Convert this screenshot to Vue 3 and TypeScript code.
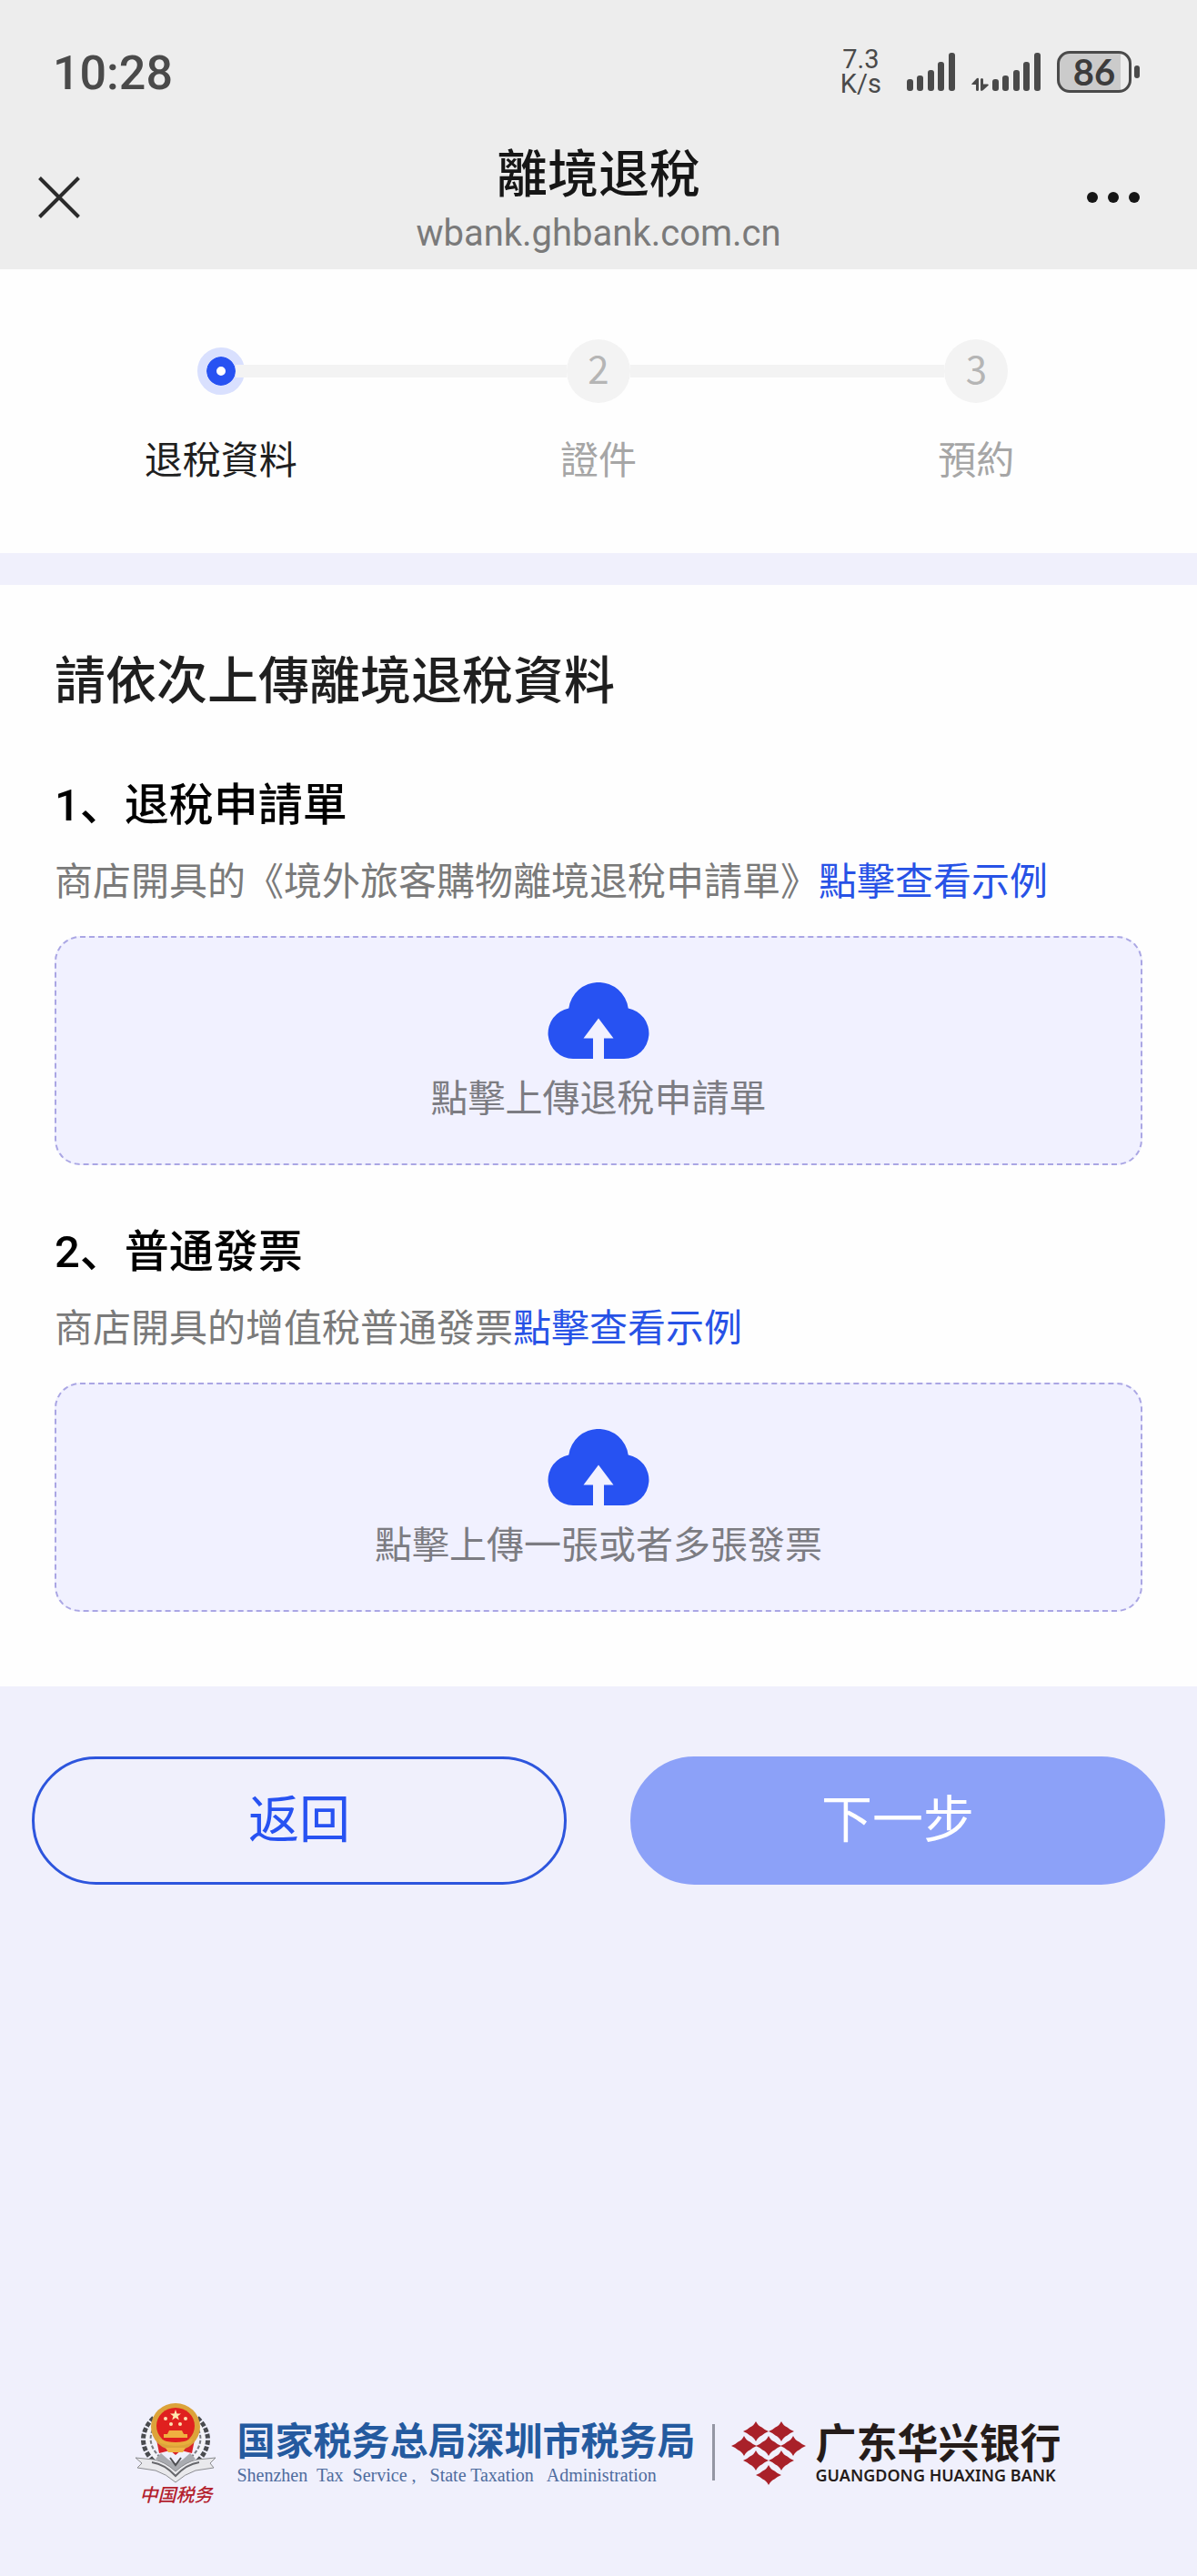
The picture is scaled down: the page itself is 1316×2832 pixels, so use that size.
<script setup lang="ts">
interface Step {
  label: string
  active: boolean
}

interface UploadItem {
  title: string
  description: string
  hint: string
}

const steps: Step[] = [
  { label: '退稅資料', active: true },
  { label: '證件', active: false },
  { label: '預約', active: false },
]

const uploads: UploadItem[] = [
  {
    title: '退稅申請單',
    description: '商店開具的《境外旅客購物離境退稅申請單》',
    hint: '點擊上傳退稅申請單',
  },
  {
    title: '普通發票',
    description: '商店開具的增值稅普通發票',
    hint: '點擊上傳一張或者多張發票',
  },
]

/* x, top of each signal bar; all share the same baseline */
const bars: [number, number][] = [
  [0, 29],
  [11, 25],
  [23, 19],
  [34, 10],
  [46, 0],
]

/* centres of the stars in the bank logo */
const stars: [number, number][] = [
  [27, 11],
  [55, 11],
  [14, 27],
  [41, 27],
  [68, 27],
  [27, 43],
  [55, 43],
  [41, 59],
]
</script>

<template>
  <div class="page">
    <header class="top">
      <div class="status">
        <time class="clock">10:28</time>
        <div class="indicators">
          <div class="speed"><span>7.3</span><span>K/s</span></div>
          <svg class="signal" width="53" height="42" viewBox="0 0 53 42" aria-hidden="true">
            <rect v-for="[x, y] in bars" :key="x" :x="x" :y="y" width="7" :height="42 - y" rx="3" />
          </svg>
          <svg class="signal data" width="76" height="42" viewBox="0 0 76 42" aria-hidden="true">
            <path d="M0 34.500 6 28Q8 27 8 29V40.500Q8 42 6.500 42T5 40.500V35H1ZM19 35.500 13 41Q10 43 10 40.500V29.500Q10 28 11.500 28T13 29.500V34.500H18Z" />
            <rect v-for="[x, y] in bars" :key="x" :x="x + 23" :y="y" width="7" :height="42 - y" rx="3" />
          </svg>
          <div class="battery">
            <div class="cell"><span>86</span></div>
            <i class="nub"></i>
          </div>
        </div>
      </div>
      <div class="nav">
        <button class="icon-button" type="button" aria-label="關閉">
          <svg width="46" height="46" viewBox="0 0 46 46">
            <path d="M1.500 1.500 44.500 44.500M44.500 1.500 1.500 44.500" fill="none" stroke="#2b2b2b" stroke-width="4" />
          </svg>
        </button>
        <div class="heading">
          <h1>離境退稅</h1>
          <p>wbank.ghbank.com.cn</p>
        </div>
        <button class="icon-button more" type="button" aria-label="更多">
          <svg width="58" height="12" viewBox="0 0 58 12" fill="#161616">
            <circle cx="6" cy="6" r="6" />
            <circle cx="29" cy="6" r="6" />
            <circle cx="52" cy="6" r="6" />
          </svg>
        </button>
      </div>
    </header>

    <ol class="steps">
      <li v-for="(step, i) in steps" :key="step.label" :class="{ active: step.active }">
        <div class="track">
          <i class="line"></i>
          <span v-if="step.active" class="dot"></span>
          <span v-else class="number">{{ i + 1 }}</span>
          <i class="line"></i>
        </div>
        <span class="label">{{ step.label }}</span>
      </li>
    </ol>

    <main class="content">
      <h2>請依次上傳離境退稅資料</h2>
      <section v-for="(item, i) in uploads" :key="item.title" class="item">
        <h3><span class="index">{{ i + 1 }}</span>、{{ item.title }}</h3>
        <p>{{ item.description }}<a href="#">點擊查看示例</a></p>
        <button class="upload" type="button">
          <svg width="112" height="84" viewBox="0 0 112 84" aria-hidden="true">
            <path
              fill="#2752f2"
              d="M23.300 28.500A33 33 0 0 1 88.700 28.500A28 28 0 0 1 84 84H62V61.500H72.500L56 39.500 39.500 61.500H50V84H28A28 28 0 0 1 23.300 28.500Z"
            />
          </svg>
          <span>{{ item.hint }}</span>
        </button>
      </section>
    </main>

    <div class="actions">
      <button class="back" type="button">返回</button>
      <button class="next" type="button">下一步</button>
    </div>

    <footer class="brands">
      <div class="emblem">
        <svg width="88" height="88" viewBox="0 0 88 88" aria-hidden="true">
          <!-- wheat ears -->
          <g fill="none" stroke="#494b4f" stroke-width="5" stroke-dasharray="5 2">
            <path d="M20 16C4 32 5 50 21 65" />
            <path d="M68 16C84 32 83 50 67 65" />
          </g>
          <g fill="none" stroke="#f4f4f6" stroke-width="3">
            <path d="M21 20C9 34 11 50 26 63M67 20C79 34 77 50 62 63" />
          </g>
          <g fill="none" stroke="#77797d" stroke-width="2" stroke-dasharray="4 2">
            <path d="M22 24C13 36 15 50 30 62M66 24C75 36 73 50 58 62" />
          </g>
          <!-- national emblem -->
          <path d="M23 40H65L62 55 50 52 44 57 38 52 26 55Z" fill="#d9232a" />
          <ellipse cx="44" cy="26" rx="27" ry="26" fill="#dca33a" />
          <ellipse cx="44" cy="25" rx="21" ry="20" fill="#e0201f" />
          <path d="M44 7 45.500 11.500H50L46.500 14.300 47.800 18.500 44 16 40.200 18.500 41.500 14.300 38 11.500H42.500Z" fill="#ffe9b0" />
          <g fill="#ffe0b0">
            <circle cx="33" cy="17" r="2" />
            <circle cx="55" cy="17" r="2" />
            <circle cx="39" cy="23" r="2" />
            <circle cx="49" cy="23" r="2" />
          </g>
          <path d="M37 30H51L53 34H57V38H31V34H35Z" fill="#f0b040" />
          <path d="M25 39Q44 47 63 39L61 44Q44 50 27 44Z" fill="#e8ae3c" />
          <path d="M33 49H55L52 54H36Z" fill="#efb445" />
          <!-- ribbon -->
          <path d="M28 55Q35 62 44 67Q53 62 60 55L66 61 44 76 22 61Z" fill="#a9abb0" />
          <path
            d="M0 60 20 62Q32 64 44 75Q56 64 68 62L88 60 82 66 86 71 66 74Q54 78 44 87Q34 78 22 74L2 71 7 66Z"
            fill="#e9e9ec"
            stroke="#8b8c90"
            stroke-width="1"
          />
          <path d="M18 65Q32 67 44 80Q56 67 70 65" fill="none" stroke="#66676b" stroke-width="2" />
          <path d="M38 60 44 68 50 60" fill="none" stroke="#4c4d50" stroke-width="2" />
        </svg>
        <span class="script">中国税务</span>
      </div>
      <div class="tax">
        <strong>国家税务总局深圳市税务局</strong>
        <small>Shenzhen&nbsp; Tax&nbsp; Service ,&nbsp;&nbsp; State Taxation&nbsp;&nbsp; Administration</small>
      </div>
      <i class="divider"></i>
      <svg class="bank-logo" width="82" height="70" viewBox="0 0 82 70" aria-hidden="true">
        <path
          v-for="[x, y] in stars"
          :key="`${x}-${y}`"
          :transform="`translate(${x} ${y})`"
          d="M0 -11Q2.500 -6 6.500 -4.500Q9 -2 14 0Q9 2 6.500 4.500Q2.500 6 0 11Q-2.500 6 -6.500 4.500Q-9 2 -14 0Q-9 -2 -6.500 -4.500Q-2.500 -6 0 -11Z"
          fill="#a92129"
        />
      </svg>
      <div class="bank">
        <strong>广东华兴银行</strong>
        <small>GUANGDONG HUAXING BANK</small>
      </div>
    </footer>
  </div>
</template>

<style>
body {
  margin: 0;
  background: #f0f0fc;
}
</style>

<style scoped>
.page {
  display: flex;
  flex-direction: column;
  min-height: 100vh;
  background: #f0f0fc;
  color: #1f1f1f;
  font-family: "Noto Sans CJK SC", "Noto Sans CJK TC", sans-serif;
}

h1,
h2,
h3,
p,
ol {
  margin: 0;
  padding: 0;
  font-weight: 500;
}

button {
  padding: 0;
  border: 0;
  background: none;
  color: inherit;
  font-family: inherit;
}

svg {
  display: block;
  flex: none;
}

.top {
  padding-bottom: 15px;
  background: #ededed;
}

.status {
  box-sizing: border-box;
  display: flex;
  align-items: center;
  justify-content: space-between;
  height: 153px;
  padding: 4px 63px 0 58px;
  color: #4a4a4a;
}

.clock {
  padding-top: 4px;
  font-family: Roboto, sans-serif;
  font-size: 52px;
  font-weight: 500;
  line-height: 60px;
}

.indicators {
  display: flex;
  align-items: center;
}

.speed {
  display: flex;
  flex-direction: column;
  align-items: center;
  margin-right: 28px;
  font-family: Roboto, sans-serif;
  font-size: 29px;
  line-height: 27px;
}

.signal {
  fill: #4a4a4a;
}

.data {
  margin: 0 18px;
}

.battery {
  display: flex;
  align-items: center;
  gap: 3px;
}

.cell {
  box-sizing: border-box;
  width: 82px;
  height: 46px;
  border: 3px solid #4a4a4a;
  border-radius: 14px;
  background: linear-gradient(to right, #cbcbcb 88%, #ededed 88%);
  color: #3c3c3c;
  font-family: Lato, sans-serif;
  font-size: 40px;
  font-weight: 700;
  line-height: 40px;
  text-align: center;
}

.nub {
  width: 6px;
  height: 14px;
  border-radius: 3px;
  background: #4a4a4a;
}

.nav {
  display: grid;
  grid-template-rows: 128px;
  grid-template-columns: 1fr auto 1fr;
  align-items: center;
  padding: 0 63px 0 42px;
}

.icon-button {
  display: flex;
  width: 58px;
}

.more {
  justify-self: end;
}

.heading {
  align-self: start;
  margin-left: 21px;
  text-align: center;
}

.heading h1 {
  color: #161616;
  font-size: 56px;
  line-height: 68px;
}

.heading p {
  padding-top: 6px;
  color: #7a7a7a;
  font-family: Roboto, sans-serif;
  font-size: 40px;
  font-weight: 400;
  line-height: 60px;
}

.steps {
  display: flex;
  padding: 77px 35px 75px;
  background: #fefefe;
  list-style: none;
}

.steps li {
  flex: 1;
  color: #a6a6a6;
  font-size: 42px;
  font-weight: 400;
  line-height: 60px;
  text-align: center;
}

.steps .active {
  color: #1f1f1f;
}

.track {
  display: flex;
  align-items: center;
  height: 70px;
  margin-bottom: 30px;
}

.line {
  flex: 1;
  height: 14px;
  background: #f3f3f3;
}

li:first-child .line:first-child,
li:last-child .line:last-child {
  background: none;
}

.number {
  width: 70px;
  height: 70px;
  border-radius: 50%;
  background: #f3f3f3;
  color: #b5b5b5;
  line-height: 62px;
}

.dot {
  box-sizing: border-box;
  width: 32px;
  height: 32px;
  border: 11px solid #2752f2;
  border-radius: 50%;
  outline: 10px solid #d9e0fe;
  background: #fff;
}

.content {
  margin-top: 35px;
  padding: 61px 60px 82px;
  background: #fefefe;
}

h2 {
  margin-bottom: 67px;
  font-size: 56px;
  line-height: 80px;
}

.item + .item {
  margin-top: 61px;
}

h3 {
  color: #000;
  font-size: 49px;
  line-height: 60px;
}

.index {
  font-family: Roboto, sans-serif;
  line-height: 40px;
}

.item p {
  margin: 25px 0 33px;
  color: #7a7a7a;
  font-size: 42px;
  font-weight: 400;
  line-height: 60px;
}

a {
  color: #2752e6;
  text-decoration: none;
}

.upload {
  box-sizing: border-box;
  display: flex;
  flex-direction: column;
  align-items: center;
  gap: 10px;
  width: 100%;
  height: 252px;
  padding-top: 49px;
  border: 2px dashed #aaa6e4;
  border-radius: 28px;
  background: #f1f1ff;
  color: #7c7c82;
  font-size: 41px;
  line-height: 60px;
}

.actions {
  display: flex;
  gap: 70px;
  padding: 77px 35px;
}

.actions button {
  box-sizing: border-box;
  flex: 1;
  height: 141px;
  padding-bottom: 12px;
  border: 3px solid #2d55dd;
  border-radius: 71px;
  color: #2752f2;
  font-size: 56px;
}

.actions .next {
  border-color: #8ca1f8;
  background: #8ca1f8;
  color: #fff;
}

.brands {
  display: flex;
  align-items: flex-start;
  justify-content: center;
  margin-top: auto;
  padding: 0 35px 76px;
}

.emblem {
  display: flex;
  flex-direction: column;
  align-items: center;
  margin-right: 23px;
}

.script {
  color: #b3202c;
  font-family: "Liberation Serif", "Noto Sans CJK SC", serif;
  font-size: 20px;
  font-style: italic;
  font-weight: 500;
  line-height: 26px;
}

.tax,
.bank {
  display: flex;
  flex-direction: column;
  white-space: nowrap;
}

.tax {
  padding-top: 15px;
  color: #245a9f;
}

.tax strong {
  font-size: 42px;
  line-height: 48px;
}

.tax small {
  color: #4f6c9e;
  font-family: "Liberation Serif", serif;
  font-size: 20px;
  line-height: 32px;
}

.divider {
  width: 3px;
  height: 62px;
  margin: 23px 18px 0;
  background: #9496a3;
}

.bank-logo {
  margin-top: 20px;
}

.bank {
  margin-left: 11px;
  padding-top: 17px;
  color: #251c1a;
}

.bank strong {
  font-size: 45px;
  line-height: 50px;
}

.bank small {
  font-family: "Noto Sans", sans-serif;
  font-size: 18px;
  font-weight: 600;
  line-height: 24px;
}
</style>
